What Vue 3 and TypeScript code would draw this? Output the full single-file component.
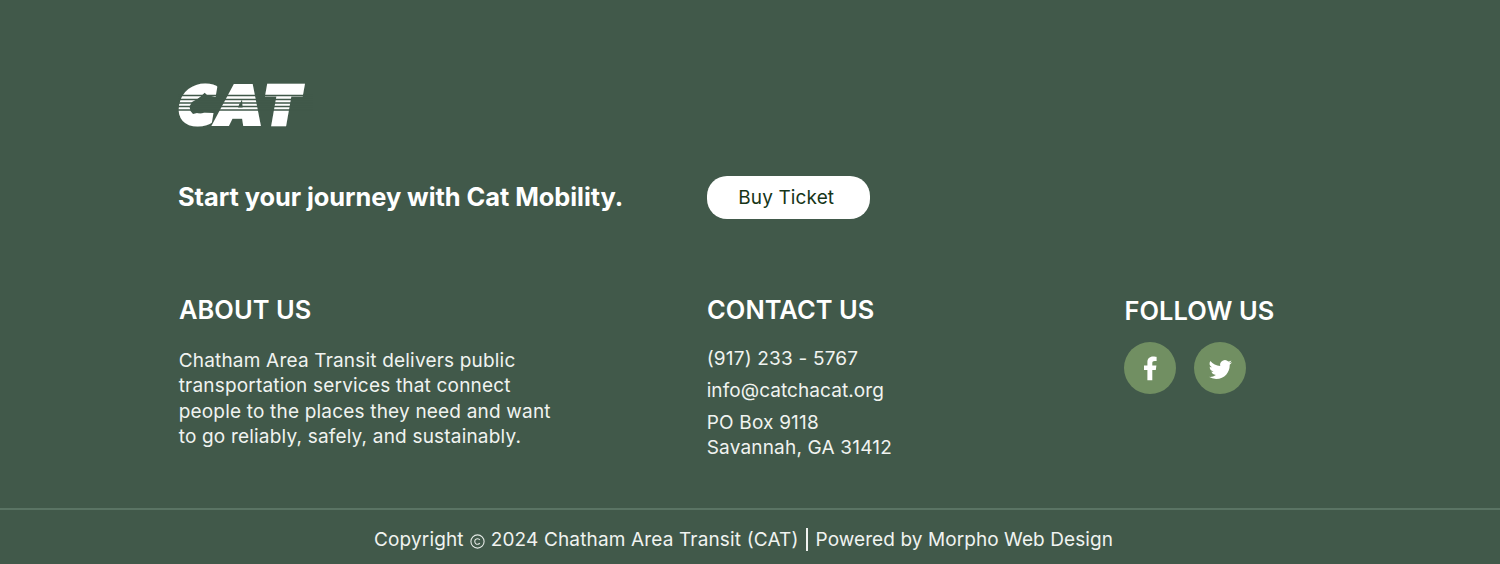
<script setup lang="ts">
const aboutLines: string[] = [
  'Chatham Area Transit delivers public',
  'transportation services that connect',
  'people to the places they need and want',
  'to go reliably, safely, and sustainably.',
]

const logoStripes: number[] = [19.5, 23.5, 27, 30.5, 34]
</script>

<template>
  <footer class="footer">
    <div class="content">
      <svg class="logo" width="135" height="52" viewBox="0 0 135 52" role="img" aria-label="CAT">
        <text class="letter" transform="translate(-2 48) skewX(-10)" textLength="43" lengthAdjust="spacingAndGlyphs">C</text>
        <path class="cutout" d="M26.7 16.7L21 22L14 26L11.5 30.5L12.5 35L15 38L21 36.5L35.5 37L33 52H50V4H40.5L37.6 21L29 19Z" />
        <text class="letter" transform="translate(35.5 48) skewX(-10)" textLength="46" lengthAdjust="spacingAndGlyphs">A</text>
        <path class="cutout" d="M64 23.5L60 31.5H64.6Z" />
        <text class="letter wide" transform="translate(83 48) skewX(-10)" textLength="36" lengthAdjust="spacingAndGlyphs">T</text>
        <path v-for="y in logoStripes" :key="y" class="stripe" :d="`M0 ${y}H135`" />
      </svg>

      <div class="cta">
        <h2 class="tagline">Start your journey with Cat Mobility.</h2>
        <button class="buy" type="button">Buy Ticket</button>
      </div>

      <div class="columns">
        <section class="about">
          <h3>ABOUT US</h3>
          <p><span v-for="line in aboutLines" :key="line" class="line">{{ line }}</span></p>
        </section>

        <section class="contact">
          <h3>CONTACT US</h3>
          <p>(917) 233 - 5767</p>
          <p class="email">info@catchacat.org</p>
          <p>PO Box 9118<br />Savannah, GA 31412</p>
        </section>

        <section class="follow">
          <h3>FOLLOW US</h3>
          <div class="socials">
            <a class="social" aria-label="Facebook">
              <svg width="52" height="52" viewBox="0 0 52 52">
                <path d="M23.4 38.3V27.9H20V23.5H23.4V20.3C23.4 16.8 25.7 14.6 29 14.6C30.6 14.6 32.6 14.9 32.6 14.9V18.9H30.7C28.9 18.9 28.3 19.8 28.3 21.1V23.5H32.4L31.8 27.9H28.3V38.3Z" />
              </svg>
            </a>
            <a class="social" aria-label="Twitter">
              <svg width="52" height="52" viewBox="0 0 52 52">
                <path transform="translate(14.8 15.9) scale(.97)" d="M23.95 4.57a10 10 0 0 1-2.82.77 4.96 4.96 0 0 0 2.16-2.72c-.95.55-2 .96-3.13 1.18a4.92 4.92 0 0 0-8.38 4.48C7.69 8.1 4.07 6.13 1.64 3.16a4.92 4.92 0 0 0 1.52 6.57 4.9 4.9 0 0 1-2.23-.61v.06a4.92 4.92 0 0 0 3.95 4.83 5 5 0 0 1-2.21.08 4.94 4.94 0 0 0 4.6 3.42A9.87 9.87 0 0 1 0 19.54a14 14 0 0 0 7.55 2.21c9.05 0 14-7.5 14-13.98 0-.21 0-.42-.02-.63a9.94 9.94 0 0 0 2.46-2.55z" />
              </svg>
            </a>
          </div>
        </section>
      </div>
    </div>

    <div class="bottom">
      <span>Copyright</span>
      <svg class="copy" width="15" height="15" viewBox="0 0 15 15" aria-label="Copyright sign">
        <circle cx="7.5" cy="7.5" r="6.6" />
        <path d="M9.8 5.8A2.8 2.8 0 1 0 9.8 9.2" />
      </svg>
      <span>2024 Chatham Area Transit (CAT)</span>
      <span class="divider"></span>
      <span class="powered">Powered by Morpho Web Design</span>
    </div>
  </footer>
</template>

<style>
body {
  margin: 0;
  background: #41594a;
}
</style>

<style scoped>
.footer {
  box-sizing: border-box;
  width: 1500px;
  height: 564px;
  overflow: hidden;
  display: flex;
  flex-direction: column;
  background: #41594a;
  color: #fff;
  font-family: Inter, 'Liberation Sans', sans-serif;
}

.content {
  box-sizing: border-box;
  height: 508px;
  padding: 76px 0 0 178px;
}

.logo {
  display: block;
  overflow: visible;
}

.letter {
  fill: #fff;
  stroke: #fff;
  stroke-width: 4;
  font-size: 52.3px;
  font-weight: 900;
}

.wide {
  stroke-width: 4.6;
}

.cutout {
  fill: #41594a;
}

.stripe {
  stroke: #41594a;
  stroke-width: 1.4;
}

.cta {
  display: grid;
  grid-template-columns: 528.5px 163.5px;
  align-items: center;
  margin-top: 47.5px;
  height: 43px;
}

.tagline {
  margin: 0;
  font-size: 25.4px;
  font-weight: 700;
  line-height: 32px;
  letter-spacing: -0.05px;
  white-space: nowrap;
}

.buy {
  height: 43px;
  padding: 0 4px 0 0;
  border: none;
  border-radius: 20px;
  background: #fff;
  color: #163518;
  font-family: inherit;
  font-size: 19px;
  letter-spacing: 0.12px;
}

.columns {
  display: grid;
  grid-template-columns: 528px 417.5px auto;
  margin-top: 75.5px;
}

h3 {
  margin: 0 0 0 1px;
  font-size: 25.4px;
  font-weight: 600;
  line-height: 32px;
  letter-spacing: 0.08px;
}

p {
  margin: 0 0 0 0.7px;
  color: #f0f3f0;
  font-size: 19px;
  line-height: 25.3px;
  letter-spacing: 0.19px;
  white-space: nowrap;
}

.line {
  display: block;
}

.about p {
  margin-top: 22px;
}

.contact p {
  margin-top: 6.5px;
}

.contact h3 + p {
  margin-top: 20px;
}

.contact .email {
  margin-top: 7px;
  letter-spacing: 0.08px;
}

.contact p:last-child {
  margin-top: 6px;
}

.follow h3 {
  margin-top: 1px;
}

.socials {
  display: flex;
  gap: 18px;
  margin: 15px 0 0 0.6px;
}

.social {
  width: 52px;
  height: 52px;
  border-radius: 50%;
  background: #718f62;
}

.social svg {
  display: block;
  fill: #fff;
}

.bottom {
  box-sizing: border-box;
  height: 56px;
  display: flex;
  align-items: center;
  padding: 5px 0 0 374px;
  border-top: 2px solid #5a7464;
  color: #f0f3f0;
  font-size: 19px;
  letter-spacing: 0.15px;
  white-space: nowrap;
}

.powered {
  letter-spacing: 0.08px;
}

.copy {
  margin: 3px 6px 0;
  fill: none;
  stroke: #e4e9e5;
  stroke-width: 1.1;
}

.divider {
  width: 2px;
  height: 23px;
  margin: -1px 7.5px 0;
  background: #f0f3f0;
}
</style>
